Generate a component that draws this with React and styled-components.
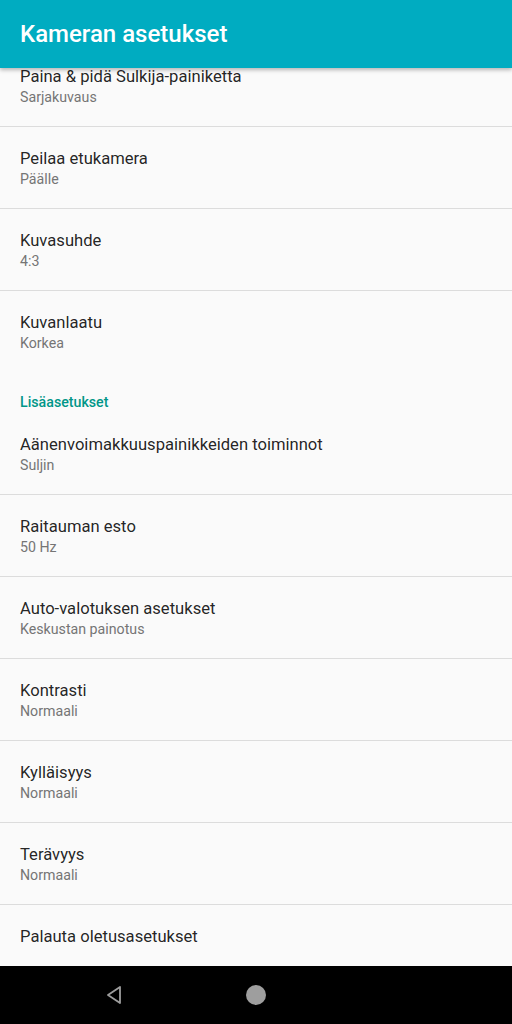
import styled, { createGlobalStyle } from 'styled-components';

const GlobalStyle = createGlobalStyle`
  html, body {
    margin: 0;
    padding: 0;
    background: #fafafa;
  }
  body {
    font-family: Roboto, "Noto Sans", sans-serif;
  }
`;

const Screen = styled.div`
  width: 512px;
  height: 1024px;
  display: flex;
  flex-direction: column;
  background: #fafafa;
  overflow: hidden;
`;

const AppBar = styled.header`
  position: relative;
  z-index: 2;
  height: 68px;
  flex: none;
  display: flex;
  align-items: center;
  padding: 0 20px;
  background: #00acc1;
  box-shadow: 0 2px 4px rgba(0, 0, 0, 0.28);
`;

const AppTitle = styled.h1`
  margin: 0;
  color: #fff;
  font-size: 24px;
  font-weight: 500;
`;

const Content = styled.main`
  flex: 1;
  overflow: hidden;
`;

const List = styled.div`
  margin-top: -23px;
  display: flex;
  flex-direction: column;
`;

const Item = styled.div`
  height: ${(p) => (p.$divider ? '82px' : p.$single ? '62px' : '81px')};
  box-sizing: border-box;
  padding: 22px 20px 0;
  border-bottom: ${(p) => (p.$divider ? '1px solid #dcdcdc' : 'none')};
  display: flex;
  flex-direction: column;
`;

const Title = styled.div`
  font-size: 16.6px;
  line-height: 20px;
  color: rgba(0, 0, 0, 0.87);
`;

const Summary = styled.div`
  font-size: 14.2px;
  line-height: 20px;
  color: #757575;
`;

const Category = styled.div`
  height: 41px;
  box-sizing: border-box;
  padding: 22px 20px 0;
  font-size: 14.2px;
  line-height: 16px;
  font-weight: 500;
  color: #009688;
`;

const NavBar = styled.nav`
  height: 58px;
  flex: none;
  background: #000;
  display: flex;
  align-items: center;
`;

const NavSlot = styled.div`
  width: 142px;
  display: flex;
  justify-content: center;
  align-items: center;
  &:first-child {
    margin-left: 43px;
  }
`;

const top = [
  ['Paina & pidä Sulkija-painiketta', 'Sarjakuvaus'],
  ['Peilaa etukamera', 'Päälle'],
  ['Kuvasuhde', '4:3'],
];

const advanced = [
  ['Aänenvoimakkuuspainikkeiden toiminnot', 'Suljin'],
  ['Raitauman esto', '50 Hz'],
  ['Auto-valotuksen asetukset', 'Keskustan painotus'],
  ['Kontrasti', 'Normaali'],
  ['Kylläisyys', 'Normaali'],
  ['Terävyys', 'Normaali'],
];

export default function App() {
  return (
    <>
      <GlobalStyle />
      <Screen>
        <AppBar>
          <AppTitle>Kameran asetukset</AppTitle>
        </AppBar>
        <Content>
          <List>
            {top.map(([t, s]) => (
              <Item key={t} $divider>
                <Title>{t}</Title>
                <Summary>{s}</Summary>
              </Item>
            ))}
            <Item>
              <Title>Kuvanlaatu</Title>
              <Summary>Korkea</Summary>
            </Item>
            <Category>Lisäasetukset</Category>
            {advanced.map(([t, s]) => (
              <Item key={t} $divider>
                <Title>{t}</Title>
                <Summary>{s}</Summary>
              </Item>
            ))}
            <Item $single>
              <Title>Palauta oletusasetukset</Title>
            </Item>
          </List>
        </Content>
        <NavBar>
          <NavSlot>
            <svg width="20" height="22" viewBox="0 0 20 22">
              <path
                d="M16 3 L4 11 L16 19 Z"
                fill="none"
                stroke="#9e9e9e"
                strokeWidth="1.8"
                strokeLinejoin="round"
              />
            </svg>
          </NavSlot>
          <NavSlot>
            <svg width="20" height="20" viewBox="0 0 20 20">
              <circle cx="10" cy="10" r="10" fill="#9e9e9e" />
            </svg>
          </NavSlot>
        </NavBar>
      </Screen>
    </>
  );
}
